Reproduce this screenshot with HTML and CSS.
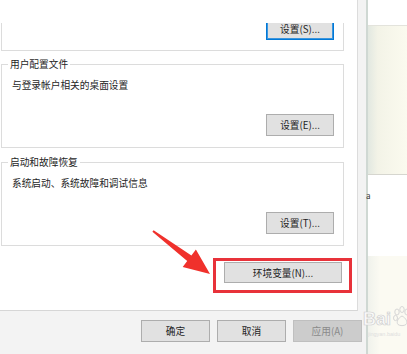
FILE: index.html
```html
<!DOCTYPE html>
<html lang="zh-CN">
<head>
  <meta charset="UTF-8">
  <meta name="viewport" content="width=device-width, initial-scale=1.0">
  <title>系统属性 - 高级</title>
  <link rel="stylesheet" href="styles.css">
</head>
<body>
  <div class="screen">
    <div class="dialog">
      <div class="page">
        <!-- 性能 (只露出底部) -->
        <div class="group group-top">
          <div class="actions actions-top">
            <button class="btn btn-focus">设置(S)...</button>
          </div>
        </div>

        <!-- 用户配置文件 -->
        <fieldset class="group">
          <legend>用户配置文件</legend>
          <p class="desc">与登录帐户相关的桌面设置</p>
          <div class="actions">
            <button class="btn">设置(E)...</button>
          </div>
        </fieldset>

        <!-- 启动和故障恢复 -->
        <fieldset class="group group-gap">
          <legend>启动和故障恢复</legend>
          <p class="desc">系统启动、系统故障和调试信息</p>
          <div class="actions">
            <button class="btn">设置(T)...</button>
          </div>
        </fieldset>

        <!-- 环境变量 (红框标注) -->
        <div class="env-row">
          <div class="highlight">
            <button class="btn btn-wide">环境变量(N)...</button>
          </div>
        </div>
      </div>

      <div class="footer">
        <button class="btn btn-foot">确定</button>
        <button class="btn btn-foot">取消</button>
        <button class="btn btn-foot btn-disabled">应用(A)</button>
      </div>
    </div>

    <div class="side">
      <div class="note"></div>
      <div class="glyph">a</div>
      <div class="lower"></div>
    </div>

    <!-- 水印 -->
    <div class="watermark">
      <span class="wm-text">Bai</span>
      <svg class="wm-paw" width="18" height="22" viewBox="0 0 18 22">
        <g fill="none" stroke="#d6d6d6" stroke-width="1">
          <ellipse cx="4" cy="6" rx="2.2" ry="3"/>
          <ellipse cx="9" cy="3.5" rx="2.2" ry="3"/>
          <ellipse cx="14" cy="6" rx="2.2" ry="3"/>
          <ellipse cx="2.5" cy="12" rx="2" ry="2.6"/>
          <path d="M9 10 C5 12 3 16 5 18.5 C7 20 11 20 13 18.5 C15 16 13 12 9 10 Z"/>
        </g>
      </svg>
      <span class="wm-sub">jingyan.baidu</span>
    </div>

    <!-- 红色箭头 -->
    <svg class="arrow" width="407" height="354" viewBox="0 0 407 354">
      <polygon fill="#f0312c" points="153.6,230.2 191.4,255.5 195.9,249.5 210,274 182.7,267.1 187.2,261.1 152.4,231.8"/>
    </svg>
  </div>
</body>
</html>
```

FILE: styles.css
```css
* {
  box-sizing: border-box;
}

body {
  margin: 0;
  font-family: "Noto Sans CJK SC", sans-serif;
  font-size: 9.7px;
  color: #1e1e1e;
  background: #fff;
}

.screen {
  position: relative;
  width: 407px;
  height: 354px;
  display: flex;
  overflow: hidden;
}

.dialog {
  width: 368px;
  background: #f3f3f3;
  border-right: 2px solid #cfd8d3;
  display: flex;
  flex-direction: column;
}

.page {
  width: 358px;
  height: 311px;
  background: #fff;
  border-right: 1px solid #dcdcdc;
  border-bottom: 1px solid #d6d6d6;
  padding: 23px 0 0 1px;
}

.group {
  width: 343px;
  margin: 7px 0 0;
  padding: 9px 9px 11px 10px;
  border: 1px solid #dcdcdc;
}

.group-top {
  margin: 0;
  height: 28px;
  padding: 0 9px 11px;
  border-top: none;
  overflow: hidden;
}

.group-gap {
  margin-top: 8px;
}

.group legend {
  margin-left: -4px;
  padding: 0 2px;
  line-height: 12px;
}

.desc {
  margin: 0;
  line-height: 12px;
}

.actions {
  display: flex;
  justify-content: flex-end;
  margin-top: 23px;
}

.actions-top {
  margin-top: -5px;
}

.btn {
  width: 68px;
  height: 22px;
  padding: 0;
  background: #e1e1e1;
  border: 1px solid #adadad;
  font: inherit;
  color: #1e1e1e;
}

.btn-focus {
  border-color: #0078d7;
  box-shadow: inset 0 0 0 1px #3b95dd;
}

.env-row {
  display: flex;
  justify-content: flex-end;
  margin-top: 12px;
  padding-right: 5px;
}

.highlight {
  border: 3px solid #e8323a;
  padding: 1px 7px 7px 8px;
}

.btn-wide {
  width: 118px;
  height: 21px;
}

.footer {
  display: flex;
  justify-content: flex-end;
  gap: 7px;
  padding: 9px 4px 0 0;
}

.btn-foot {
  width: 69px;
}

.btn-disabled {
  background: #cccccc;
  border-color: #bfbfbf;
  color: #8a8a8a;
}

.side {
  flex: 1;
  background: #fff;
  display: flex;
  flex-direction: column;
}

.note {
  margin-top: 25px;
  height: 150px;
  background: linear-gradient(to right, #e2e8e1, #f3f3e7 25%, #fbfaef);
  border-top: 1px solid #e3e3dc;
  border-bottom: 1px solid #d6d6cf;
}

.glyph {
  margin: 17px 0 0 -2px;
  height: 7px;
  font-size: 8px;
  line-height: 7px;
  color: #333;
}

.lower {
  margin-top: auto;
  height: 98px;
  background: linear-gradient(to right, #f0f2ec, #fbfaf2 30%);
}

.watermark {
  position: absolute;
  left: 362px;
  top: 304px;
  width: 45px;
  height: 40px;
}

.wm-text {
  position: absolute;
  left: 1px;
  top: 6px;
  font-family: "Liberation Sans", sans-serif;
  font-size: 18px;
  font-weight: bold;
  line-height: 18px;
  color: #fafafa;
  -webkit-text-stroke: 0.7px #cfcfcf;
}

.wm-paw {
  position: absolute;
  left: 31px;
  top: 2px;
}

.wm-sub {
  position: absolute;
  left: 6px;
  top: 27px;
  font-family: "Liberation Sans", sans-serif;
  font-size: 5.5px;
  color: #dedede;
  white-space: nowrap;
}

.arrow {
  position: absolute;
  left: 0;
  top: 0;
  pointer-events: none;
}
```
